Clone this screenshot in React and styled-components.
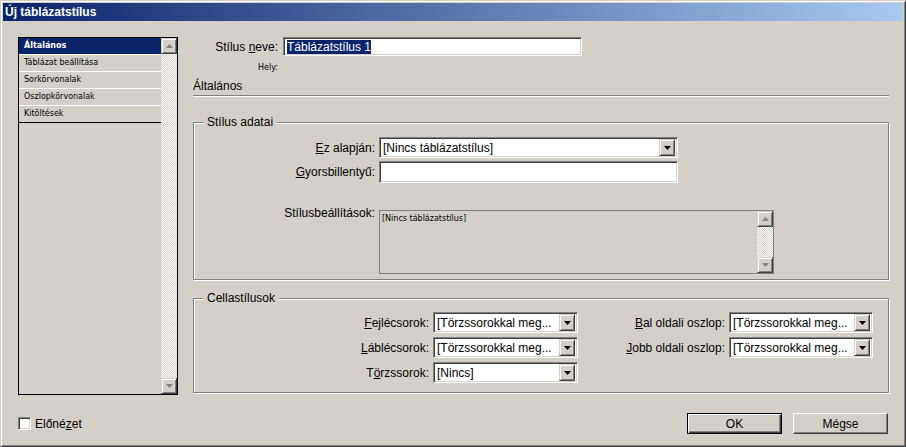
import React from 'react'
import styled, { createGlobalStyle } from 'styled-components'

const GlobalStyle = createGlobalStyle`
  html, body {
    margin: 0;
    padding: 0;
    background: #d4d0c8;
  }
  body {
    font-family: "Liberation Sans", Arial, sans-serif;
    font-size: 12px;
    color: #000;
  }
`

const FACE = '#d4d0c8'
const SMALL_FONT = '"DejaVu Sans", Verdana, sans-serif'

const Window = styled.div`
  width: 906px;
  height: 447px;
  box-sizing: border-box;
  padding: 2px;
  background: ${FACE};
  border: 1px solid;
  border-color: ${FACE} #404040 #404040 ${FACE};
  box-shadow: inset 1px 1px 0 #fff, inset -1px -1px 0 #808080;
  display: flex;
  flex-direction: column;
  overflow: hidden;
`

const TitleBar = styled.div`
  flex: none;
  height: 18px;
  display: flex;
  align-items: center;
  padding-left: 2px;
  background: linear-gradient(to right, #0a246a, #a6caf0);
`

const TitleText = styled.span`
  color: #fff;
  font-weight: bold;
  font-size: 12px;
`

const Body = styled.div`
  padding: 16px 14px 0 15px;
  display: flex;
  flex-direction: column;
`

const Columns = styled.div`
  display: flex;
  gap: 15px;
  align-items: flex-start;
`

const Sidebar = styled.div`
  width: 160px;
  height: 358px;
  flex: none;
  box-sizing: border-box;
  border: 1px solid #000;
  display: flex;
`

const NavList = styled.ul`
  list-style: none;
  margin: 0;
  padding: 0;
  flex: 1;
  display: flex;
  flex-direction: column;
`

const NavItem = styled.li`
  height: 16px;
  line-height: 16px;
  padding-left: 5px;
  font-family: ${SMALL_FONT};
  font-size: 8px;
  border-bottom: 1px solid #fff;
  background: ${p => (p.$active ? '#0a246a' : 'transparent')};
  color: ${p => (p.$active ? '#fff' : '#000')};
  font-weight: ${p => (p.$active ? 'bold' : 'normal')};
  &:last-of-type {
    border-bottom: 1px solid #000;
  }
`

const ScrollBar = styled.div`
  width: 16px;
  display: flex;
  flex-direction: column;
`

const Track = styled.div`
  flex: 1;
  background: repeating-conic-gradient(#fff 0 25%, ${FACE} 0 50%) 0 0 / 2px 2px;
`

const ScrollBtn = styled.div`
  width: 16px;
  height: 16px;
  box-sizing: border-box;
  background: ${FACE};
  border: 1px solid;
  border-color: ${FACE} #404040 #404040 ${FACE};
  box-shadow: inset 1px 1px 0 #fff, inset -1px -1px 0 #808080;
  display: flex;
  align-items: center;
  justify-content: center;
`

const Main = styled.div`
  flex: 1;
  display: flex;
  flex-direction: column;
`

const NameRow = styled.div`
  display: flex;
  align-items: center;
  gap: 5px;
`

const Label = styled.label`
  width: ${p => p.$w || 'auto'};
  text-align: right;
  white-space: nowrap;
  font-size: 12px;
  line-height: 14px;
`

const SmallLabel = styled.div`
  width: 85px;
  text-align: right;
  font-family: ${SMALL_FONT};
  font-size: 8px;
  margin-top: 6px;
  height: 12px;
  line-height: 12px;
`

const SectionTitle = styled.div`
  margin-top: 5px;
  font-size: 12px;
  line-height: 14px;
`

const Separator = styled.div`
  margin-top: 2px;
  height: 0;
  border-top: 1px solid #808080;
  border-bottom: 1px solid #fff;
`

const Field = styled.div`
  width: ${p => p.$w};
  height: ${p => p.$h || '21px'};
  box-sizing: border-box;
  background: #fff;
  border: 1px solid;
  border-color: #808080 #fff #fff #808080;
  box-shadow: inset 1px 1px 0 #404040, inset -1px -1px 0 ${FACE};
  display: flex;
  align-items: center;
  padding: 2px 2px 2px 3px;
  font-size: 12px;
  white-space: nowrap;
  overflow: hidden;
`

const Selected = styled.span`
  background: #0a246a;
  color: #fff;
`

const ValueText = styled.span`
  flex: 1;
  overflow: hidden;
`

const DropBtn = styled.div`
  width: 16px;
  height: 17px;
  flex: none;
  box-sizing: border-box;
  background: ${FACE};
  border: 1px solid;
  border-color: ${FACE} #404040 #404040 ${FACE};
  box-shadow: inset 1px 1px 0 #fff, inset -1px -1px 0 #808080;
  display: flex;
  align-items: center;
  justify-content: center;
`

const Group = styled.fieldset`
  margin: ${p => p.$top} 0 0 0;
  padding: ${p => p.$pad};
  border: 1px solid #808080;
  box-shadow: 1px 1px 0 #fff, inset 1px 1px 0 #fff;
  min-width: 0;
`

const Legend = styled.legend`
  margin-left: 9px;
  padding: 0 4px;
  background: ${FACE};
  font-size: 12px;
  line-height: 14px;
`

const FormGrid = styled.div`
  display: grid;
  grid-template-columns: 181px auto;
  column-gap: 4px;
  row-gap: 3px;
  align-items: center;
  justify-content: start;
`

const SpacedRow = styled.div`
  grid-column: 1 / -1;
  display: grid;
  grid-template-columns: 181px auto;
  column-gap: 4px;
  margin-top: 24px;
  align-items: start;
  & > label {
    margin-top: -4px;
  }
`

const NotesBox = styled.div`
  width: 395px;
  height: 64px;
  box-sizing: border-box;
  border: 1px solid #808080;
  display: flex;
`

const NotesText = styled.div`
  flex: 1;
  font-family: ${SMALL_FONT};
  font-size: 8px;
  padding: 3px 2px;
`

const CellGrid = styled.div`
  display: grid;
  grid-template-columns: 384px 295px;
  row-gap: 4px;
`

const CellField = styled.div`
  display: flex;
  align-items: center;
  justify-content: flex-end;
  gap: 4px;
  grid-column: ${p => p.$col};
  grid-row: ${p => p.$row};
`

const Footer = styled.div`
  margin-top: 18px;
  display: flex;
  align-items: center;
  justify-content: space-between;
  padding-right: 1px;
`

const CheckWrap = styled.label`
  display: flex;
  align-items: center;
  gap: 4px;
  font-size: 12px;
`

const CheckBox = styled.span`
  width: 13px;
  height: 13px;
  box-sizing: border-box;
  background: #fff;
  border: 1px solid;
  border-color: #808080 #fff #fff #808080;
  box-shadow: inset 1px 1px 0 #404040, inset -1px -1px 0 ${FACE};
`

const Buttons = styled.div`
  display: flex;
  gap: 11px;
`

const Button = styled.button`
  width: 95px;
  height: 21px;
  box-sizing: border-box;
  padding: 0;
  font-family: "Liberation Sans", Arial, sans-serif;
  font-size: 12px;
  color: #000;
  background: ${FACE};
  border: 1px solid;
  border-color: ${p => (p.$default ? '#000' : `#fff #404040 #404040 #fff`)};
  box-shadow: ${p =>
    p.$default
      ? 'inset 1px 1px 0 #fff, inset -1px -1px 0 #404040, inset -2px -2px 0 #808080'
      : 'inset -1px -1px 0 #808080'};
`

const Arrow = ({ dir = 'down', color = '#000' }) => (
  <svg width="7" height="4" viewBox="0 0 7 4">
    {dir === 'down' ? (
      <polygon points="0,0 7,0 3.5,4" fill={color} />
    ) : (
      <polygon points="0,4 7,4 3.5,0" fill={color} />
    )}
  </svg>
)

const Select = ({ w, value }) => (
  <Field $w={w}>
    <ValueText>{value}</ValueText>
    <DropBtn>
      <Arrow />
    </DropBtn>
  </Field>
)

const navItems = [
  'Általános',
  'Táblázat beállítása',
  'Sorkörvonalak',
  'Oszlopkörvonalak',
  'Kitöltések',
]

const cellFields = [
  { label: <><u>F</u>ejlécsorok:</>, value: '[Törzssorokkal meg...', col: 1, row: 1, w: '145px' },
  { label: <><u>L</u>áblécsorok:</>, value: '[Törzssorokkal meg...', col: 1, row: 2, w: '145px' },
  { label: <>T<u>ö</u>rzssorok:</>, value: '[Nincs]', col: 1, row: 3, w: '145px' },
  { label: <><u>B</u>al oldali oszlop:</>, value: '[Törzssorokkal meg...', col: 2, row: 1, w: '144px' },
  { label: <><u>J</u>obb oldali oszlop:</>, value: '[Törzssorokkal meg...', col: 2, row: 2, w: '144px' },
]

export default function App() {
  return (
    <>
      <GlobalStyle />
      <Window>
        <TitleBar>
          <TitleText>Új táblázatstílus</TitleText>
        </TitleBar>
        <Body>
          <Columns>
            <Sidebar>
              <NavList>
                {navItems.map((item, i) => (
                  <NavItem key={item} $active={i === 0}>
                    {item}
                  </NavItem>
                ))}
              </NavList>
              <ScrollBar>
                <ScrollBtn>
                  <Arrow dir="up" color="#808080" />
                </ScrollBtn>
                <Track />
                <ScrollBtn>
                  <Arrow color="#808080" />
                </ScrollBtn>
              </ScrollBar>
            </Sidebar>
            <Main>
              <NameRow>
                <Label $w="85px">
                  Stílus <u>n</u>eve:
                </Label>
                <Field $w="299px" $h="19px">
                  <Selected>Táblázatstílus 1</Selected>
                </Field>
              </NameRow>
              <SmallLabel>Hely:</SmallLabel>
              <SectionTitle>Általános</SectionTitle>
              <Separator />

              <Group $top="18px" $pad="8px 0 5px 0">
                <Legend>Stílus adatai</Legend>
                <FormGrid>
                  <Label>
                    <u>E</u>z alapján:
                  </Label>
                  <Select w="299px" value="[Nincs táblázatstílus]" />
                  <Label>
                    <u>G</u>yorsbillentyű:
                  </Label>
                  <Field $w="299px" $h="22px" />
                  <SpacedRow>
                    <Label>Stílusbeállítások:</Label>
                    <NotesBox>
                      <NotesText>[Nincs táblázatstílus]</NotesText>
                      <ScrollBar>
                        <ScrollBtn>
                          <Arrow dir="up" color="#808080" />
                        </ScrollBtn>
                        <Track />
                        <ScrollBtn>
                          <Arrow color="#808080" />
                        </ScrollBtn>
                      </ScrollBar>
                    </NotesBox>
                  </SpacedRow>
                </FormGrid>
              </Group>

              <Group $top="11px" $pad="7px 0 9px 0">
                <Legend>Cellastílusok</Legend>
                <CellGrid>
                  {cellFields.map((f, i) => (
                    <CellField key={i} $col={f.col} $row={f.row}>
                      <Label>{f.label}</Label>
                      <Select w={f.w} value={f.value} />
                    </CellField>
                  ))}
                </CellGrid>
              </Group>
            </Main>
          </Columns>
          <Footer>
            <CheckWrap>
              <CheckBox />
              <span>
                Előné<u>z</u>et
              </span>
            </CheckWrap>
            <Buttons>
              <Button $default>OK</Button>
              <Button>Mégse</Button>
            </Buttons>
          </Footer>
        </Body>
      </Window>
    </>
  )
}
